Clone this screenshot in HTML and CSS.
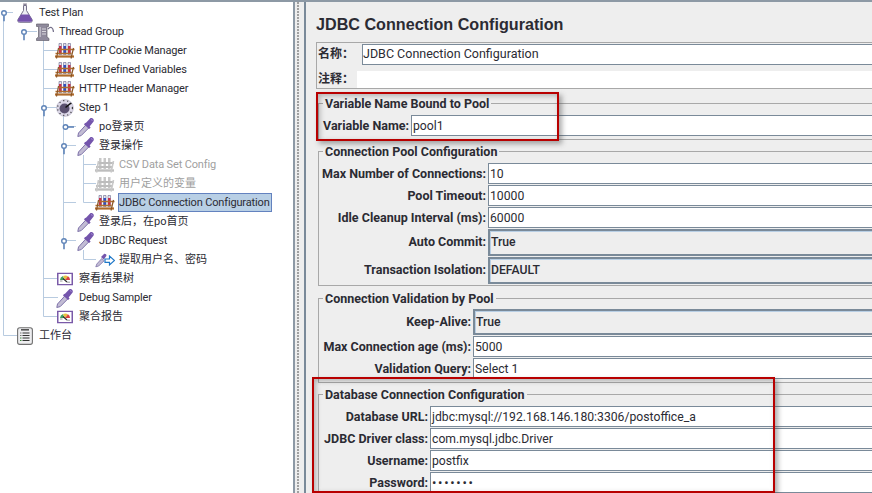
FILE: index.html
```html
<!DOCTYPE html>
<html lang="en">
<head>
<meta charset="utf-8">
<title>JDBC Connection Configuration</title>
<link rel="stylesheet" href="styles.css">
</head>
<body>
<svg class="defs" width="0" height="0" aria-hidden="true">
  <symbol id="i-flask" viewBox="0 0 16 20">
    <path d="M6 0.500h4l-.5 1.500H6.500z" fill="#8c8698"/>
    <path d="M6.500 2.500v5L1 16.500c-.8 1.600 0 2.800 1.500 2.800h11c1.500 0 2.300-1.200 1.500-2.800L9.500 7.500v-5z" fill="#eeeef4" stroke="#77728c" stroke-width="1"/>
    <path d="M4 11.500h8l3 5c.6 1.400-.2 2.300-1.500 2.300h-11c-1.300 0-2.100-.9-1.500-2.300z" fill="#7552ac"/>
  </symbol>
  <symbol id="i-spool" viewBox="0 0 18 18">
    <path d="M0.500 1h12v2.500h-1.500V14l2 1.500V17.500H0.500v-2l2-1.500V3.500H0.500z" fill="#8f8a9c" stroke="#66636f" stroke-width=".7"/>
    <path d="M3.500 4v10h1.500V4z" fill="#bdbac6"/>
    <path d="M6 6h4M6 8.500h4M6 11h4" stroke="#d8d6dc" stroke-width="1"/>
    <path d="M12 6c2.500-3 5-2 5.500 3" fill="none" stroke="#77728c" stroke-width="1.300"/>
  </symbol>
  <symbol id="i-rack" viewBox="0 0 20 16">
    <path d="M4 .5h2.500v11H4zM8.500 .5H11v11H8.500zM13 .5h2.500v11H13z" fill="#e6e2f0" stroke="#68688c" stroke-width=".6"/>
    <path d="M4 3h2.500v8H4z" fill="#c8304a"/><path d="M8.500 3H11v8H8.500z" fill="#3050c0"/><path d="M13 3h2.500v8H13z" fill="#c8304a"/>
    <path d="M3.500 6.500h16M.5 10.500h16" stroke="#b06c2c" stroke-width="1.700"/>
    <path d="M0 13.500h19" stroke="#b06c2c" stroke-width="2.200"/>
    <path d="M3.500 5L1.500 15.500M18.500 5l-2.500 10.500" stroke="#8a5424" stroke-width="1.200"/>
  </symbol>
  <symbol id="i-rack-off" viewBox="0 0 20 16">
    <path d="M4 1h2.500v11H4zM8.500 1H11v11H8.500zM13 1h2.500v11H13z" fill="#c8c8c8"/>
    <path d="M3 6h16M1 10h16" stroke="#bdbdbd" stroke-width="2"/>
    <path d="M0 13.500h19" stroke="#bdbdbd" stroke-width="2.400"/>
    <path d="M3.500 4L1.500 15.500M18.500 4l-2.500 11.500" stroke="#c9c9c9" stroke-width="1.600"/>
  </symbol>
  <symbol id="i-timer" viewBox="0 0 18 18">
    <circle cx="9" cy="9" r="8.400" fill="#dcd8e8" stroke="#b5b0c6" stroke-width=".6"/>
    <circle cx="9" cy="9" r="7.400" fill="none" stroke="#2e2e2e" stroke-width="1.100" stroke-dasharray="1.100 3"/>
    <circle cx="8.500" cy="9.500" r="5" fill="#5b5170"/>
    <path d="M9.500 8.500l5.500-4.500" stroke="#111" stroke-width="1.600"/>
  </symbol>
  <symbol id="i-dropper" viewBox="0 0 18 20">
    <path d="M.8 19.500l.7-3.500L9.500 7.200l3 3-8.300 8.400z" fill="#c2bcd4" stroke="#7e72a8" stroke-width="1"/>
    <path d="M9 5.800l4.300-4.500c1.400-1.300 4.500 1 3.300 3.100l-4 5 1 1.200-1.500 1.300L6.900 7.300l1.300-1.300z" fill="#7455ac"/>
    <path d="M14 2.500l1.500 1" stroke="#a890d8" stroke-width="1"/>
  </symbol>
  <symbol id="i-post" viewBox="0 0 20 15">
    <path d="M.8 14.500l1-3 5-5.500 2.300 2.300-5.200 5z" fill="#c2bcd4" stroke="#7e72a8" stroke-width=".8"/>
    <path d="M6 4.500l3-3c1-1 3 .5 2.300 2L8.800 7z" fill="#7455ac"/>
    <path d="M10 6.500h4.500V3.500l5 4.500-5 4.500V9.800H10z" fill="#fff" stroke="#1f78c8" stroke-width="1.200"/>
  </symbol>
  <symbol id="i-chart" viewBox="0 0 16 13">
    <rect x=".75" y=".75" width="14.500" height="11.500" fill="#fff" stroke="#7a5aa8" stroke-width="1.500"/>
    <path d="M3 7.500a5 4.500 0 0 1 3-3.900L7.500 7.500z" fill="#40a060"/>
    <path d="M6 3.600a5 4.500 0 0 1 5 .2L8 7.500z" fill="#e8c040"/>
    <path d="M11 3.800a5 4.500 0 0 1 2 3.700H8z" fill="#d84040"/>
    <path d="M6 6l4 3.500" stroke="#333" stroke-width="1.200"/>
    <path d="M3 8.500h2.500M10 9.700h3" stroke="#999" stroke-width="1"/>
  </symbol>
  <symbol id="i-bench" viewBox="0 0 16 18">
    <rect x=".6" y=".8" width="14.800" height="16.600" rx="2.200" fill="#eeeef0" stroke="#707070" stroke-width="1.100"/>
    <path d="M4 2.800h8" stroke="#555" stroke-width="1.600"/>
    <path d="M5.500 6h7M5.500 8.500h7M5.500 11h7M5.500 13.500h7" stroke="#333" stroke-width="1.100"/>
    <path d="M3 6h1.500M3 8.500h1.500" stroke="#777" stroke-width="1"/>
    <path d="M3 11h1.500M3 13.500h1.500" stroke="#3a8a3a" stroke-width="1"/>
  </symbol>
  <symbol id="i-handle" viewBox="0 0 8 12">
    <circle cx="4" cy="3.500" r="2.300" fill="#fff" stroke="#5f84b8" stroke-width="1.400"/>
    <path d="M4 6v6" stroke="#5f84b8" stroke-width="1.600"/>
  </symbol>
  <symbol id="i-handle-h" viewBox="0 0 12 8">
    <circle cx="3.500" cy="4" r="2.300" fill="#fff" stroke="#5f84b8" stroke-width="1.400"/>
    <path d="M6 4h6" stroke="#5f84b8" stroke-width="1.600"/>
  </symbol>
</svg>

<div class="app">
  <nav class="tree">
    <svg class="tree-lines" width="293" height="345" aria-hidden="true">
      <path d="M3.500 16V335.500H18M23 31.500H37M43.500 40V316.500M43.500 50.500H58M43.500 69.500H58M43.500 88.500H58M43.500 107.500H58M43.500 278.500H58M43.500 297.500H58M43.500 316.500H58M63.500 116V240M63.500 202.500H76M63.500 126.500H76M63.500 145.500H76M63.500 240.500H76M83.500 155V202.500H96M83.500 164.500H96M83.500 183.500H96M83.500 250V259.500H96M3.500 12.500H13" fill="none" stroke="#b8cbe0" stroke-width="1"/>
    </svg>
    <div class="node l0"><svg class="handle" width="8" height="12"><use href="#i-handle"/></svg><svg class="ico" width="16" height="20"><use href="#i-flask"/></svg><span>Test Plan</span></div>
    <div class="node l1"><svg class="handle" width="8" height="12"><use href="#i-handle"/></svg><svg class="ico" width="18" height="18"><use href="#i-spool"/></svg><span>Thread Group</span></div>
    <div class="node l2"><svg class="ico" width="20" height="16"><use href="#i-rack"/></svg><span>HTTP Cookie Manager</span></div>
    <div class="node l2"><svg class="ico" width="20" height="16"><use href="#i-rack"/></svg><span>User Defined Variables</span></div>
    <div class="node l2"><svg class="ico" width="20" height="16"><use href="#i-rack"/></svg><span>HTTP Header Manager</span></div>
    <div class="node l2"><svg class="handle" width="8" height="12"><use href="#i-handle"/></svg><svg class="ico" width="18" height="18"><use href="#i-timer"/></svg><span>Step 1</span></div>
    <div class="node l3 zh"><svg class="handle side" width="12" height="8"><use href="#i-handle-h"/></svg><svg class="ico" width="18" height="20"><use href="#i-dropper"/></svg><span>po登录页</span></div>
    <div class="node l3 zh"><svg class="handle" width="8" height="12"><use href="#i-handle"/></svg><svg class="ico" width="18" height="20"><use href="#i-dropper"/></svg><span>登录操作</span></div>
    <div class="node l4 off"><svg class="ico" width="20" height="16"><use href="#i-rack-off"/></svg><span>CSV Data Set Config</span></div>
    <div class="node l4 off zh"><svg class="ico" width="20" height="16"><use href="#i-rack-off"/></svg><span>用户定义的变量</span></div>
    <div class="node l4 sel"><svg class="ico" width="20" height="16"><use href="#i-rack"/></svg><span>JDBC Connection Configuration</span></div>
    <div class="node l3 zh"><svg class="ico" width="18" height="20"><use href="#i-dropper"/></svg><span>登录后，在po首页</span></div>
    <div class="node l3"><svg class="handle" width="8" height="12"><use href="#i-handle"/></svg><svg class="ico" width="18" height="20"><use href="#i-dropper"/></svg><span>JDBC Request</span></div>
    <div class="node l4 zh"><svg class="ico" width="20" height="15"><use href="#i-post"/></svg><span>提取用户名、密码</span></div>
    <div class="node l2 zh"><svg class="ico" width="16" height="13"><use href="#i-chart"/></svg><span>察看结果树</span></div>
    <div class="node l2"><svg class="ico" width="18" height="20"><use href="#i-dropper"/></svg><span>Debug Sampler</span></div>
    <div class="node l2 zh"><svg class="ico" width="16" height="13"><use href="#i-chart"/></svg><span>聚合报告</span></div>
    <div class="node l0 zh"><svg class="ico" width="16" height="18"><use href="#i-bench"/></svg><span>工作台</span></div>
  </nav>

  <div class="splitter"><span class="grip"></span></div>

  <main class="panel">
    <h1 class="title">JDBC Connection Configuration</h1>
    <section class="names">
      <div class="name-row">
        <label class="cjk-label">名称：</label>
        <div class="field">JDBC Connection Configuration</div>
      </div>
      <div class="comment-row">
        <label class="cjk-label">注释：</label>
        <div class="comment"></div>
      </div>
    </section>

    <fieldset class="group g1">
      <legend>Variable Name Bound to Pool</legend>
      <div class="row"><label>Variable Name:</label><div class="field">pool1</div></div>
    </fieldset>

    <fieldset class="group g2">
      <legend>Connection Pool Configuration</legend>
      <div class="row"><label>Max Number of Connections:</label><div class="field">10</div></div>
      <div class="row"><label>Pool Timeout:</label><div class="field">10000</div></div>
      <div class="row"><label>Idle Cleanup Interval (ms):</label><div class="field">60000</div></div>
      <div class="row combo-row"><label>Auto Commit:</label><div class="combo">True</div></div>
      <div class="row combo-row"><label>Transaction Isolation:</label><div class="combo">DEFAULT</div></div>
    </fieldset>

    <fieldset class="group g3">
      <legend>Connection Validation by Pool</legend>
      <div class="row combo-row"><label>Keep-Alive:</label><div class="combo">True</div></div>
      <div class="row"><label>Max Connection age (ms):</label><div class="field">5000</div></div>
      <div class="row"><label>Validation Query:</label><div class="field">Select 1</div></div>
    </fieldset>

    <fieldset class="group g4">
      <legend>Database Connection Configuration</legend>
      <div class="row"><label>Database URL:</label><div class="field">jdbc:mysql://192.168.146.180:3306/postoffice_a</div></div>
      <div class="row"><label>JDBC Driver class:</label><div class="field">com.mysql.jdbc.Driver</div></div>
      <div class="row"><label>Username:</label><div class="field">postfix</div></div>
      <div class="row"><label>Password:</label><div class="field pw">•••••••</div></div>
    </fieldset>
  </main>
</div>

<div class="mark mark-pool"></div>
<div class="mark mark-db"></div>
</body>
</html>
```

FILE: styles.css
```css
* { box-sizing: border-box; }
html, body { margin: 0; padding: 0; width: 872px; height: 493px; overflow: hidden; background: #fff; }
body {
  position: relative;
  font-family: Roboto, "Noto Sans CJK SC", sans-serif;
  font-size: 12.2px;
  color: #2b2b33;
}
.defs { position: absolute; }

.app { display: flex; height: 493px; overflow: hidden; border-top: 2px solid #8d99a5; }

/* tree */
.tree { position: relative; width: 293px; flex: none; padding-top: 1px; background: #fff; font-size: 11px; letter-spacing: -.15px; }
.tree-lines { position: absolute; left: 0; top: -2px; }
.node { position: relative; height: 19px; display: flex; align-items: center; white-space: nowrap; }
.node span { position: absolute; top: 2px; line-height: 15px; }
.node.zh { letter-spacing: 0; }
.node .ico { position: absolute; top: 50%; transform: translate(-50%, -50%); }
.node .handle { position: absolute; top: 50%; transform: translate(-50%, -3.500px); }
.node .handle.side { transform: translate(-50%, -50%); }
.l0 span { left: 39px; } .l0 .ico { left: 25px; } .l0 .handle { left: 4px; }
.l1 span { left: 59px; } .l1 .ico { left: 45px; } .l1 .handle { left: 24px; }
.l2 span { left: 79px; } .l2 .ico { left: 65px; } .l2 .handle { left: 44px; }
.l3 span { left: 99px; } .l3 .ico { left: 86px; } .l3 .handle { left: 64px; }
.l4 span { left: 119px; } .l4 .ico { left: 105px; }
.l3 .handle.side { left: 68px; }
.off span { color: #a0a0a0; }
.sel span { left: 118px; top: 0; height: 19px; line-height: 17px; padding: 0 1px 0 0; background: #b8cfe5; border: 1px solid #6382bf; }

/* splitter */
.splitter {
  width: 13px; flex: none; background: #eee;
  border-left: 2px solid #8d99a5; border-right: 2px solid #7a8a99;
  display: flex; justify-content: center; padding-right: 2px;
}
.grip {
  width: 3px; height: 100%;
  background-image: radial-gradient(circle at 1px 1px, #9a9a9a 0.7px, transparent 0.8px);
  background-size: 3px 3px;
}

/* panel */
.panel { flex: 1; min-width: 0; overflow: hidden; background: #eee; padding: 0 0 0 10px; }
.title { margin: 0; height: 40px; padding-top: 13px; font-size: 16.15px; line-height: 19px; font-weight: 700; color: #2b2b33; white-space: nowrap; font-family: "Liberation Sans", sans-serif; }

.names { width: 620px; height: 47px; border: 1px solid #a8a8a8; border-right: 0; }
.name-row { display: flex; height: 22px; align-items: stretch; padding-top: 1px; }
.comment-row { display: flex; height: 23px; align-items: flex-end; }
.cjk-label { width: 45px; flex: none; padding-left: 1px; font-weight: 700; font-size: 12px; line-height: 18px; font-family: "Noto Sans CJK SC", sans-serif; }
.comment-row .cjk-label { width: 40px; line-height: 17px; margin-bottom: 2px; }
.comment { flex: 1; height: 17px; background: #fff; }

.group { width: 620px; margin: 0 0 0 2px; padding: 0 0 0 3px; border: 1px solid #a8a8a8; border-right: 0; min-width: 0; }
.group legend { margin-left: 1px; padding: 0 2px; height: 14px; line-height: 16px; font-size: 12.5px; font-weight: 700; color: #2b2b33; }
.g1 { margin-top: 7px; padding-top: 5px; padding-bottom: 3px; }
.g2 { margin-top: 4px; padding-top: 5px; padding-bottom: 1px; }
.g3 { margin-top: 5px; padding-top: 4px; padding-bottom: 3px; }
.g4 { margin-top: 4px; padding-top: 5px; padding-bottom: 4px; }

.row { display: flex; height: 21px; margin-bottom: 1px; }
.row:last-child { margin-bottom: 0; }
.combo-row { height: 27px; }
.g3 .combo-row { height: 26px; }
.row label { flex: none; text-align: right; padding-right: 2px; line-height: 22px; font-size: 12.5px; font-weight: 700; color: #2b2b33; white-space: nowrap; }
.combo-row label { line-height: 26px; }
.g1 label { width: 89px; }
.g2 label { width: 166px; }
.g3 label { width: 151px; }
.g4 label { width: 108px; }

.field { flex: 1; min-width: 0; border: 1px solid #7a8a99; background: #fff; padding-left: 1px; line-height: 20px; white-space: nowrap; overflow: hidden; }
.name-row .field { line-height: 18px; font-size: 12.5px; padding-left: 0; }
.combo { flex: 1; border: 2px solid #7a8a99; border-right-width: 1px; box-shadow: inset 1px 1px 0 #b8cfe5; background: #eee; padding-left: 1px; line-height: 22px; font-weight: 500; }
.pw { letter-spacing: 1.7px; font-size: 13px; }

/* review marks drawn over the screenshot */
.mark { position: absolute; border: 2px solid #b80000; box-shadow: 3px 3px 5px rgba(70, 70, 70, .45), inset 2px 2px 5px rgba(70, 70, 70, .35); pointer-events: none; }
.mark-pool { left: 316px; top: 92px; width: 243px; height: 49px; }
.mark-db { left: 312px; top: 377px; width: 463px; height: 116px; }
```
